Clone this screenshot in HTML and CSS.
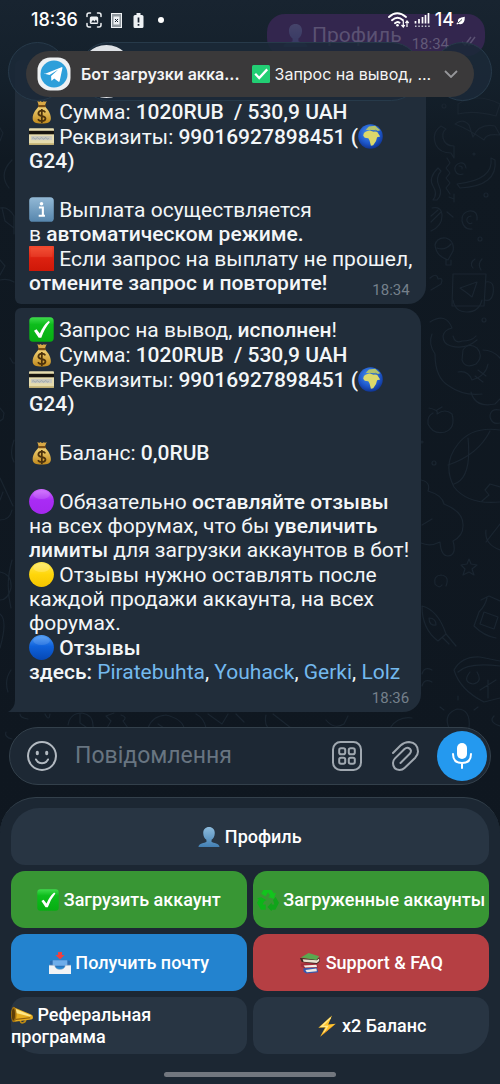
FILE: index.html
```html
<!DOCTYPE html>
<html lang="ru">
<head>
<meta charset="utf-8">
<meta name="viewport" content="width=device-width, initial-scale=1">
<title>Бот загрузки аккаунтов</title>
<link rel="stylesheet" href="styles.css">
</head>
<body>
<svg class="sprite" aria-hidden="true">
  <defs>
    <linearGradient id="g-purple" x2="0" y2="1"><stop stop-color="#cf6bff"/><stop offset=".45" stop-color="#a92bf5"/><stop offset="1" stop-color="#a428ee"/></linearGradient>
    <linearGradient id="g-yellow" x2="0" y2="1"><stop stop-color="#ffe955"/><stop offset=".5" stop-color="#ffd60a"/><stop offset="1" stop-color="#f5c400"/></linearGradient>
    <linearGradient id="g-blue" x2="0" y2="1"><stop stop-color="#4d9bf5"/><stop offset=".45" stop-color="#0f62dc"/><stop offset="1" stop-color="#0648b4"/></linearGradient>
    <linearGradient id="g-red" x2="0" y2="1"><stop stop-color="#f2492f"/><stop offset=".5" stop-color="#dc2110"/><stop offset="1" stop-color="#cf1808"/></linearGradient>
    <linearGradient id="g-green" x2="0" y2="1"><stop stop-color="#3fdc4c"/><stop offset=".3" stop-color="#0dbd1c"/><stop offset="1" stop-color="#07ad12"/></linearGradient>
    <linearGradient id="g-info" x2="0" y2="1"><stop stop-color="#93b9d6"/><stop offset="1" stop-color="#5686ad"/></linearGradient>
    <linearGradient id="g-gold" x2="0" y2="1"><stop stop-color="#f3d478"/><stop offset="1" stop-color="#c18a1d"/></linearGradient>
    <linearGradient id="g-person" x2="0" y2="1"><stop stop-color="#8dbbdc"/><stop offset="1" stop-color="#4380b4"/></linearGradient>
    <radialGradient id="g-sea" cx=".45" cy=".35" r=".7"><stop stop-color="#4c96f0"/><stop offset=".6" stop-color="#1e58cc"/><stop offset="1" stop-color="#0d2d86"/></radialGradient>
    <symbol id="e-money" viewBox="0 0 24 24"><path d="M8 2q2 1.500 3.200 0q1.300 1.500 3 .2q1.200 1 2.800-.2l-2 5h-5.500z" fill="#d9a845"/><path d="M9.300 7h6c1.500 2 5.700 6 5.700 11.500 0 4-3 5-8.800 5S3.500 22.500 3.500 18.500C3.500 13 8 9 9.300 7z" fill="url(#g-gold)"/><rect x="8.600" y="5.800" width="7.600" height="2.200" rx="1.100" fill="#7a4e15"/><path d="M15.700 12.800c-.7-1.200-2-1.600-3.400-1.600-2 0-3.300 1-3.300 2.600 0 3.700 6.800 1.700 6.800 5 0 1.500-1.400 2.500-3.500 2.500-1.700 0-3-.7-3.700-1.900M12.300 9.500v13.500" stroke="#4b310c" stroke-width="1.700" fill="none"/></symbol>
    <symbol id="e-card" viewBox="0 0 24 24"><rect y="4" width="24" height="16" rx="1" fill="#e6dcae"/><path d="M0 6.500h24v3.400H0z" fill="#17140e"/><rect x="2" y="11.500" width="20" height="4" fill="#c9c8bd"/><path d="M3 13.800q1-1.400 2 0t2 0 2 0 2 0 2 0 2 0 2 0 2 0" stroke="#8a99a6" fill="none" stroke-width=".7"/><path d="M0 18.500h24V20H0z" fill="#c2ae6e"/></symbol>
    <symbol id="e-info" viewBox="0 0 24 24"><rect x=".2" y=".2" width="23.600" height="23.600" rx="3.500" fill="url(#g-info)"/><circle cx="12" cy="6.500" r="1.700" fill="#fff"/><path d="M9.500 10h3.800v7.500M9.300 18h6" stroke="#fff" stroke-width="2" fill="none"/></symbol>
    <symbol id="e-red" viewBox="0 0 24 24"><rect width="24" height="24" rx=".8" fill="url(#g-red)"/><path d="M1.500 1.500h21v9h-21z" fill="#ff7a5a" opacity=".2"/></symbol>
    <symbol id="e-check" viewBox="0 0 24 24"><rect x=".3" y=".3" width="23.400" height="23.400" rx="3.500" fill="url(#g-green)"/><path d="M4.800 13.200l2.400-1.500 3.200 4.200q3-7.500 8.300-12l1.400 1Q15 11 11.800 19.800H9.300z" fill="#fff"/></symbol>
    <symbol id="e-check-flat" viewBox="0 0 18 18"><rect width="18" height="18" rx="1.500" fill="#22cf74"/><path d="M3.200 8.800l4 4.200 8-8.600" stroke="#fff" stroke-width="2.300" fill="none"/></symbol>
    <symbol id="e-globe" viewBox="0 0 24 24"><circle cx="12" cy="12" r="11.800" fill="url(#g-sea)"/><path d="M5.500 9q2-3 7-2.500l6 1.200 2.800 4.200-3 .8-1 3.600-2.700 4.200-2.200.3-1.300-5-1.200-2.200-3.400-.4-1.500-2z" fill="#dcd86a"/><path d="M7.500 5.500L10.500 2.500l6-.8 5 4.300-3.500 1-3.500-1.300-3 .6z" fill="#b3c26c"/><path d="M12 6l3 1 2-1 2 1" stroke="#2d67b8" fill="none" stroke-width=".8"/></symbol>
    <symbol id="e-purple" viewBox="0 0 24 24"><circle cx="12" cy="12" r="11.900" fill="url(#g-purple)"/><ellipse cx="12" cy="5.500" rx="8" ry="4" fill="#fff" opacity=".12"/></symbol>
    <symbol id="e-yellow" viewBox="0 0 24 24"><circle cx="12" cy="12" r="11.900" fill="url(#g-yellow)"/><ellipse cx="12" cy="5.500" rx="8" ry="4" fill="#fff" opacity=".2"/></symbol>
    <symbol id="e-blue" viewBox="0 0 24 24"><circle cx="12" cy="12" r="11.900" fill="url(#g-blue)"/><ellipse cx="12" cy="5.500" rx="8" ry="4" fill="#fff" opacity=".12"/></symbol>
    <symbol id="e-person" viewBox="0 0 24 24"><path d="M12 1c3.800 0 6.300 2.600 6.300 6.500 0 3.300-1.500 6.300-3.500 7.500v2.500c2 1.200 8.500 1 8.700 5.500H.5c.2-4.500 6.700-4.300 8.700-5.500V15c-2-1.200-3.500-4.200-3.500-7.500C5.700 3.600 8.200 1 12 1z" fill="url(#g-person)"/></symbol>
    <symbol id="e-outbox" viewBox="0 0 24 24"><path d="M1 10l3-1h16l3 1v6H1z" fill="#2c6cb3"/><path d="M4 9h16v6H4z" fill="#6fadea"/><path d="M0 14.500l6 .2q1 4.300 6 4.300t6-4.300l6-.2V24H0z" fill="#f2f3f5"/><path d="M0 14.500h6q1 4.500 6 4.500t6-4.500h6" stroke="#b7c2cf" fill="none" stroke-width=".6"/><path d="M9.800 0h4.400v3.300H17L12 8.200 7 3.300h2.800z" fill="#ef4040"/></symbol>
    <symbol id="e-recycle" viewBox="0 0 24 24"><path d="M7 1.200h9L18.500 5l2.300-1-2.500 6.700-6.300-2 2.500-1L12 3.500 9.500 8 4.700 5.300z" fill="#12c51d"/><path d="M4.500 9l6 3.300-2.300.8L6 17h3.500v5.500H4.300L0 15l2-3.500-2-1.300z" fill="#0cb518"/><path d="M17.500 12l2.800-3.200L24 15l-4 7.500h-4v2l-4.500-5 4.500-4.800V17h3z" fill="#10a51a"/></symbol>
    <symbol id="e-books" viewBox="0 0 24 24"><path d="M5 17l14-1.500 2 6.500-13 1.500-3-2z" fill="#3458b0"/><path d="M7 19.500l12-1.500.5 3-11 1.200z" fill="#eee9df"/><path d="M2 12.500l17.500-.5 1.500 5-15 .8-4-2z" fill="#a12b39"/><path d="M5 14.800l14-1 .7 2.500-13 .5z" fill="#f2ede2"/><path d="M1 6.500L19 8l3.500-2v4.500l-3 2.500L3 11z" fill="#3d2722"/><path d="M4 8l15.500 1 2.500-1.800v2.700l-2.600 2.200L5 10.500z" fill="#e9e1cf"/><path d="M2 6l8.500-5L22 4.500 19 8.600z" fill="#5aa84f"/></symbol>
    <symbol id="e-bolt" viewBox="0 0 24 24"><path d="M17.500.5L2.500 13.800l7.500-.3L4.500 23.700 21.500 9.500l-8.200.8z" fill="#ffc42e"/><path d="M16 3L6 12.500l6.500-.2-4 7" stroke="#ffe98a" stroke-width="1.300" fill="none"/><path d="M21.500 9.500L4.500 23.700l6-6z" fill="#f08a12"/></symbol>
    <symbol id="e-horn" viewBox="0 0 24 24"><path d="M10 17q0 4 3 3.500t3-3.500" stroke="#b98714" stroke-width="1.800" fill="none"/><path d="M3 3.500L22 11.500q2 .5 2 3t-2 2.500L2 19.500z" fill="#e6ad20"/><path d="M4 5l18 7.500-1.500 1L4 9.500z" fill="#ffe786"/><path d="M3 17l18-2" stroke="#8f600c" stroke-width="1.300"/><ellipse cx="3" cy="11.500" rx="3" ry="8.500" fill="#a5720f"/><ellipse cx="2.600" cy="11.500" rx="1.800" ry="6.500" fill="#5c3d08"/></symbol>
  </defs>
</svg>

<div class="app">
  <svg class="doodles" viewBox="0 0 500 1084" preserveAspectRatio="xMidYMin slice" aria-hidden="true">
    <g fill="none" stroke="#1a2530" stroke-width="1.200" stroke-linejoin="round" stroke-linecap="round">
      <path d="M458 104q18-12 42 0l-4 12q-22-6-38-2zM455 124q8-6 14 1l4 12q6-14 22-11l5 9q-14-2-16 5-14-10-29-16"/>
      <path d="M441 126q-10 7-5 19 4 8 15 8l3 5v-12q-9 0-11-8-1-6 3-9z"/>
      <path d="M466 168q-1-6-6-5-6 2-5 7 2 6 8 4m-4-8q4 0 3 3"/>
      <path d="M491 158q3 22-34 26l3 4q38-2 35-28z"/>
      <path d="M438 168q-10 10-5 18 5 8 0 14h4q6-6 2-14-4-8 2-15zM447 158l3 5-4 5 4 5-4 5 4 5-4 5 4 6"/>
      <path d="M477 220q1-10-8-9-8 2-7 10 2 9 10 8m-1-13q-5 1-4 5 2 4 5 2"/>
      <path d="M432 208q10-2 10 8 0 10-11 15M431 222l10-10M431 216l7-6M449 197l5 2m0-5v8M447 212l6 5"/>
      <path d="M435 245q2-8 11-7 9 3 7 13l-5 9q-12-4-13-15zM437 248q8 3 14-4M446 259v6h5v-5"/>
      <circle cx="480" cy="239" r="2"/><circle cx="486" cy="195" r="2"/><circle cx="474" cy="154" r="1"/><circle cx="444" cy="106" r="2"/>
      <path d="M430 278q7-6 8 1 6-2 3 5l-10 6M453 274h33l-2 32h-32zM486 282q9-2 7 12-2 8-8 6M460 288l17-6-5 15-5-4zM473 268q-4-5 2-9M481 270q-4-6 1-11"/>
      <path d="M453 300q2 12 14 12t15-12M430 322q16-10 22 6-8 2-9 8 0 8 8 10 14 4 26-6M432 334q-4 10 3 20 0 24 14 32 14 10 33 8"/>
      <path d="M453 336q2 8 9 5 10 0 14-5M463 350q5-8 14-2 7 8-1 16-11 5-14-4zM458 372q10-2 14 8 14-4 16-16M483 350q10 0 17 8M471 392q4 16 24 12l5-5M475 376l8 6M478 370l8 6"/>
      <path d="M429 408q10 2 8 6 8-6 15 0 4 14-7 18-12 3-17-8-1-8 5-11M437 410l5-3"/>
      <path d="M500 410q-10-2-10 7 2 8 10 6M500 430q-28-4-42 14-16 20-4 43 14 18 46 15M468 438q4 40-14 46M448 465q30-10 42-34M500 487l-10-3-5 6 4 5-7 6"/>
      <circle cx="434" cy="463" r="2"/><circle cx="422" cy="442" r="1"/><circle cx="484" cy="320" r="2"/>
      <path d="M421 480q10 2 7 11 14 4 16 13 20 8 19 22 0 10-10 15 4 14-5 15-7 0-8-14-10 5-19 1M422 525l10-6"/>
      <path d="M469 559l2 5 6 1-5 4 2 6-5-3-6 3 2-6-4-4 6-1zM446 586q4-10-5-11-8 1-6 9 4 5 7 1M422 606q16 4 24 28l-8 7q-16-12-16-35zM446 634l10 12M443 638l6 6M429 618q7 0 7 7-7 1-7-7"/>
      <path d="M486 530q-2 14 14 20M500 524l-14 18M481 600l8-4 11 5M479 612l-5 14q10 10 22 12M479 612q6-6 8-14M484 612l14 5-4 12-14-5z"/>
      <path d="M454 670q8-14 26-13l20 4M454 670q6 20 30 32l16-4M458 672q10-10 42-6M470 672q-8 10 3 12 10-2 4-12M488 680v18M480 690l16-10"/>
      <path d="M449 728q-6-14 8-19 14 0 12 19M458 700v-4M444 710l-4-3M474 710l4-3M432 670q-8-4-10 4M432 682q-8-4-10 4"/>
      <path d="M0 128l3 5-3 8M12 160q-14 14-3 28M0 208q8-2 14 8v18M2 208l3 13 9 7M0 260l5 6-5 9M0 280q8-2 14 2M10 358l3 5 3 0M0 408l4 5-1 6-3 2M14 440q-5 14 0 22M0 478l13 28M3 492l-3 8M0 520q10 0 12-10M12 560q-7 24-1 48M0 572q12 2 11 16-3 12-11 12M0 614q8 6 0 34M11 670q-7 10-3 22"/>
      <path d="M20 714q0 4 8 5M45 714q4 8 5 0M68 725q2-12 14-12 12 2 11 15M80 714v9l6 4M107 728l4-7-5-5 8-3M121 715q7 2 2 6l5 7M148 728q4-12 18-13 16 4 18 13M158 724l6 4M196 714q8 4 10 14M208 714l14 10 6-10M236 714l8 8M266 715q-2 8 2 13M273 714l18 14M326 720q8 10 18 4l4-8M390 728q8-12 22-10M6 732q-2 5 6 7M494 716q-6 6 6 10"/>
    </g>
  </svg>

  <main class="chat">
    <article class="bubble bubble--out">
      <svg class="emoji emoji--dim" role="img" aria-label="👤"><use href="#e-person"/></svg>
      <span class="out-text">Профиль</span>
      <time>18:34</time>
      <svg class="ticks" viewBox="0 0 16 10" aria-hidden="true"><path d="M1 6l3 3 6-8M7 8l1 1 6-8" fill="none" stroke="currentColor" stroke-width="1.500"/></svg>
    </article>

    <article class="bubble bubble--covered">
      <div class="block">
        <p><svg class="emoji" role="img" aria-label="💰"><use href="#e-money"/></svg> Сумма: <b>1020RUB&nbsp; / 530,9 UAH</b></p>
        <p><svg class="emoji" role="img" aria-label="💳"><use href="#e-card"/></svg> Реквизиты: <b>99016927898451 (<svg class="emoji" role="img" aria-label="🌍"><use href="#e-globe"/></svg><br>G24)</b></p>
      </div>
      <div class="block">
        <p><svg class="emoji" role="img" aria-label="ℹ️"><use href="#e-info"/></svg> Выплата осуществляется<br>в <b>автоматическом режиме.</b></p>
        <div class="last-line">
          <p><svg class="emoji" role="img" aria-label="🟥"><use href="#e-red"/></svg> Если запрос на выплату не прошел,<br><b>отмените запрос и повторите!</b></p>
          <time>18:34</time>
        </div>
      </div>
    </article>

    <article class="bubble bubble--tail">
      <div class="block">
        <p><svg class="emoji" role="img" aria-label="✅"><use href="#e-check"/></svg> Запрос на вывод, <b>исполнен</b>!</p>
        <p><svg class="emoji" role="img" aria-label="💰"><use href="#e-money"/></svg> Сумма: <b>1020RUB&nbsp; / 530,9 UAH</b></p>
        <p><svg class="emoji" role="img" aria-label="💳"><use href="#e-card"/></svg> Реквизиты: <b>99016927898451 (<svg class="emoji" role="img" aria-label="🌍"><use href="#e-globe"/></svg><br>G24)</b></p>
      </div>
      <div class="block">
        <p><svg class="emoji" role="img" aria-label="💰"><use href="#e-money"/></svg> Баланс: <b>0,0RUB</b></p>
      </div>
      <div class="block">
        <p><svg class="emoji" role="img" aria-label="🟣"><use href="#e-purple"/></svg> Обязательно <b>оставляйте отзывы</b><br>на всех форумах, что бы <b>увеличить<br>лимиты</b> для загрузки аккаунтов в бот!</p>
        <p><svg class="emoji" role="img" aria-label="🟡"><use href="#e-yellow"/></svg> Отзывы нужно оставлять после<br>каждой продажи аккаунта, на всех<br>форумах.</p>
        <p><svg class="emoji" role="img" aria-label="🔵"><use href="#e-blue"/></svg> <b>Отзывы<br>здесь:</b> <a href="#piratebuhta">Piratebuhta</a>, <a href="#youhack">Youhack</a>, <a href="#gerki">Gerki</a>, <a href="#lolz">Lolz</a></p>
      </div>
      <time>18:36</time>
      <svg class="tail" viewBox="0 0 16 22" aria-hidden="true"><path d="M7 0v10q0 8-7 12h16V0z" fill="#212d3a"/></svg>
    </article>
  </main>

  <form class="composer">
    <button class="icon-btn" type="button" aria-label="Емодзі"><svg viewBox="0 0 32 32"><g fill="none" stroke="#b3bac1" stroke-width="2" stroke-linecap="round"><circle cx="16" cy="16" r="14"/><path d="M10 19.500q2 3.800 6 3.800t6-3.800"/></g><ellipse cx="11.300" cy="13" rx="1.600" ry="2.200" fill="#b3bac1"/><ellipse cx="20.700" cy="13" rx="1.600" ry="2.200" fill="#b3bac1"/></svg></button>
    <input class="field" type="text" placeholder="Повідомлення" aria-label="Повідомлення">
    <button class="icon-btn" type="button" aria-label="Клавіатура бота"><svg viewBox="0 0 32 32"><g fill="none" stroke="#a0a8b0" stroke-width="2"><rect x="2" y="2" width="28" height="28" rx="7.500"/><rect x="8.200" y="8.200" width="6" height="6" rx="1.800"/><rect x="17.800" y="8.200" width="6" height="6" rx="1.800"/><rect x="8.200" y="17.800" width="6" height="6" rx="1.800"/><rect x="17.800" y="17.800" width="6" height="6" rx="1.800"/></g></svg></button>
    <button class="icon-btn" type="button" aria-label="Прикріпити файл"><svg viewBox="0 0 32 32"><path d="M4 13l7.500-7.500Q15.500 2 20 2q9 1 9 9.500 0 3.500-3 6.500L15.500 28q-2 2-5 2-6.500-.5-6.500-7 0-2.600 2-4.600L15.500 9q2-1.800 4-1 4 2 1.500 5.500L11.500 23" fill="none" stroke="#a0a8b0" stroke-width="2" stroke-linecap="round" stroke-linejoin="round"/></svg></button>
    <button class="mic" type="button" aria-label="Голосове повідомлення"><svg viewBox="0 0 24 28"><rect x="7" y="1" width="10" height="16" rx="5" fill="#fff"/><path d="M3 12q0 9 9 9t9-9M12 21v5" fill="none" stroke="#fff" stroke-width="2" stroke-linecap="round"/></svg></button>
  </form>

  <section class="keyboard" aria-label="Клавиатура бота">
    <div class="keys">
      <button class="key key--wide" type="button"><span><svg class="emoji" aria-hidden="true"><use href="#e-person"/></svg> Профиль</span></button>
      <button class="key key--green" type="button"><span><svg class="emoji" aria-hidden="true"><use href="#e-check"/></svg> Загрузить аккаунт</span></button>
      <button class="key key--green" type="button"><span><svg class="emoji" aria-hidden="true"><use href="#e-recycle"/></svg> Загруженные аккаунты</span></button>
      <button class="key key--blue" type="button"><span><svg class="emoji" aria-hidden="true"><use href="#e-outbox"/></svg> Получить почту</span></button>
      <button class="key key--red" type="button"><span><svg class="emoji" aria-hidden="true"><use href="#e-books"/></svg> Support &amp; FAQ</span></button>
      <button class="key key--start" type="button"><span><svg class="emoji" aria-hidden="true"><use href="#e-horn"/></svg> Реферальная<br>программа</span></button>
      <button class="key key--end" type="button"><span><svg class="emoji" aria-hidden="true"><use href="#e-bolt"/></svg> x2 Баланс</span></button>
    </div>
    <div class="home-bar"></div>
  </section>

  <div class="chat-header" aria-hidden="true">
    <span class="round"></span>
    <span class="title-pill"><span class="avatar"></span></span>
    <span class="round"></span>
  </div>

  <header class="status">
    <span class="clock">18:36</span>
    <svg class="st-icon st-icon--shot" viewBox="0 0 16 16" aria-hidden="true"><g fill="none" stroke="#eef1f4" stroke-width="1.500" stroke-linecap="round"><path d="M1 4.500V3q0-2 2-2h1.500M11.500 1H13q2 0 2 2v1.500M15 11.500V13q0 2-2 2h-1.500M4.500 15H3q-2 0-2-2v-1.500"/></g><rect x="3.800" y="4.500" width="8.400" height="7.500" rx="1.500" fill="#eef1f4"/><path d="M5 10.500l2-2.500 1.500 1.500L10 7.500l1.500 3z" fill="#17222e"/></svg>
    <svg class="st-icon st-icon--tall" viewBox="0 0 11 15" aria-hidden="true"><rect x=".5" y=".5" width="10" height="14" fill="#8f979e" stroke="#eef1f4"/><rect x="2.500" y="3.500" width="6" height="8" fill="#eef1f4"/><path d="M4 6l3 3M7 6L4 9" stroke="#17222e"/></svg>
    <svg class="st-icon st-icon--tall st-icon--battery" viewBox="0 0 11 15" aria-hidden="true"><path d="M3.500 0h4v2H9q1.500 0 1.500 1.500v10Q10.500 15 9 15H2Q.5 15 .5 13.500v-10Q.5 2 2 2h1.500z" fill="#eef1f4"/><path d="M5.500 4.500v5M5.500 11v1.700" stroke="#17222e" stroke-width="1.700"/></svg>
    <span class="dot"></span>
    <svg class="st-icon st-icon--wifi" viewBox="0 0 22 16" aria-hidden="true"><g fill="none" stroke="#fff" stroke-width="1.900" stroke-linecap="round"><path d="M1 5q8-7.500 17 0M4 8.200q5.500-5 11 0M7 11.200q2.500-2.200 4.500-.5"/></g><circle cx="9.500" cy="13.300" r="1.300" fill="#fff"/><path d="M15.300 9v6m-1.800-2l1.800 2 1.500-2M19 15V9m-1.600 2L19 9l1.700 2" stroke="#fff" stroke-width="1.200" fill="none"/></svg>
    <svg class="st-icon st-icon--signal" viewBox="0 0 16 16" aria-hidden="true"><path d="M1.500 9v2.500M5 7v4.500M8.500 5v6.500M11.500 3v8.500M14.500 1v10.500" stroke="#fff" stroke-width="1.700"/><path d="M1 14.200h15" stroke="#c5cad0" stroke-width="1.500" stroke-dasharray="1.500 1.800"/></svg>
    <span class="charge">14</span>
    <svg class="st-icon st-icon--leaf" viewBox="0 0 9 9" aria-hidden="true"><path d="M8.800.8Q9 8.500 4 8.300l-1.500-.5L1 8.500l-.6-.8L2 6Q.6 1.800 8.800.8z" fill="#fff"/><path d="M2 7l4-3.500" stroke="#17222e" stroke-width=".8"/></svg>
  </header>

  <aside class="banner">
    <svg class="banner-logo" viewBox="0 0 34 34" aria-hidden="true"><rect x=".5" y=".5" width="33" height="33" rx="12.500" fill="#eef1f3"/><circle cx="17" cy="17" r="13.500" fill="#2d9fda"/><path d="M7.500 17L24.500 10.200q1.200-.4.9 1L22.700 24q-.4 1.300-1.500.6l-4-3-2.200 2q-.6.400-.7-.5l-.2-4 7.200-6.600-8.800 5.600-5-1.300q-.8-.4 0-.8z" fill="#fff"/></svg>
    <strong class="banner-title">Бот загрузки акка...</strong>
    <svg class="banner-check" role="img" aria-label="✅"><use href="#e-check-flat"/></svg>
    <span class="banner-text">Запрос на вывод, ...</span>
    <button class="expand" type="button" aria-label="Развернуть"><svg viewBox="0 0 14 8"><path d="M1 1l6 6 6-6" fill="none" stroke="#96979a" stroke-width="1.800"/></svg></button>
  </aside>
</div>
</body>
</html>
```
FILE: styles.css
```css
* { box-sizing: border-box; }

body {
  margin: 0;
  background: #101922;
  color: #f3f6f8;
  font-family: Roboto, "Noto Sans", sans-serif;
}

p { margin: 0; }
a { color: #74b9ee; text-decoration: none; }
b { font-weight: 500; }

button {
  margin: 0;
  padding: 0;
  border: 0;
  background: none;
  color: inherit;
  font: inherit;
}

.sprite { position: absolute; width: 0; height: 0; }

.app {
  position: relative;
  display: flex;
  flex-direction: column;
  min-height: 100vh;
  overflow: hidden;
  background: linear-gradient(#182430 0, #14202b 80px, #101922 160px, #0f1720 760px, #101821 100%);
}

.doodles {
  position: absolute;
  inset: 0;
  width: 100%;
  height: 100%;
}

/* Messages */
.chat {
  position: relative;
  flex: 1;
  display: flex;
  flex-direction: column;
  justify-content: flex-end;
  align-items: flex-start;
  gap: 4px;
  padding: 0 15px 15px;
}

.bubble {
  position: relative;
  display: flex;
  flex-direction: column;
  gap: 25px;
  padding: 10px 12px 5px 14px;
  border-radius: 6px 18px 18px 6px;
  background: #212d3a;
  font-size: 21px;
  line-height: 24px;
}

.bubble--covered {
  padding-top: 40px;
  padding-right: 16px;
}

.bubble--tail { border-bottom-left-radius: 0; }
.bubble--tail > time { margin-top: -20px; }

.bubble--out {
  align-self: flex-end;
  flex-direction: row;
  align-items: center;
  gap: 4px;
  height: 42px;
  padding: 0 8px 0 16px;
  border-radius: 18px;
  background: #33264e;
  color: #5b5273;
}

.out-text { padding-right: 6px; }
.bubble--out time { align-self: flex-end; margin-bottom: 3px; color: #625a78; }
.ticks { align-self: flex-end; width: 16px; height: 10px; margin: 0 0 10px 8px; }

.block {
  display: flex;
  flex-direction: column;
  gap: 1px;
}

.last-line {
  display: flex;
  align-items: flex-end;
}

.last-line p { margin-bottom: 4px; }
.last-line time { margin-left: -40px; }

time {
  align-self: flex-end;
  color: #75808b;
  font-size: 15px;
  line-height: 18px;
}

.tail {
  position: absolute;
  left: -7px;
  bottom: 0;
  width: 16px;
  height: 22px;
}

.emoji {
  display: inline-block;
  width: 25px;
  height: 25px;
  margin: -4px 0;
  vertical-align: -1px;
}

.emoji--dim { opacity: 0.2; }

/* Message field */
.composer {
  position: relative;
  display: flex;
  align-items: center;
  gap: 26px;
  margin: 0 9px 12px;
  padding: 3px 3px 3px 16px;
  border: 1px solid #33404b;
  border-radius: 29px;
  background: #1d2834;
}

.icon-btn { width: 32px; height: 32px; }
.icon-btn svg { display: block; width: 32px; height: 32px; }

.field {
  flex: 1;
  min-width: 0;
  margin-left: -9px;
  padding: 0;
  border: 0;
  outline: 0;
  background: none;
  color: #f3f6f8;
  font: 23px/28px Roboto, "Noto Sans", sans-serif;
}

.field::placeholder { color: #687581; opacity: 1; }

.mic {
  display: flex;
  align-items: center;
  justify-content: center;
  width: 50px;
  height: 50px;
  margin-left: -10px;
  border-radius: 50%;
  background: #2499ef;
}

.mic svg { width: 24px; height: 28px; }

/* Reply keyboard */
.keyboard {
  position: relative;
  padding: 10px 11px 7px;
  border-top: 1px solid #33404b;
  border-radius: 36px 36px 0 0;
  background: #1c2733;
}

.keys {
  display: grid;
  grid-template-columns: 1fr 1fr;
  gap: 6px;
}

.key {
  display: flex;
  align-items: center;
  justify-content: center;
  min-height: 57px;
  border-radius: 14px;
  background: #283543;
  color: #fff;
  font-size: 18px;
  font-weight: 500;
  line-height: 22px;
  white-space: nowrap;
}

.key .emoji {
  width: 22px;
  height: 22px;
}

.key--wide {
  grid-column: 1 / -1;
  border-radius: 28px 28px 14px 14px;
}

.key--green { background: #389634; }
.key--blue { background: #2383cf; }
.key--red { background: #b53f43; }

.key--start {
  justify-content: flex-start;
  border-bottom-left-radius: 28px;
  text-align: left;
}

.key--end { border-bottom-right-radius: 28px; }

.home-bar {
  width: 36%;
  height: 5px;
  margin: 18px auto 0;
  border-radius: 3px;
  background: #72777f;
}

/* Chat header seen behind the banner */
.chat-header {
  position: absolute;
  top: 42px;
  left: 8px;
  right: 8px;
  display: flex;
  gap: 12px;
}

.round,
.title-pill {
  height: 59px;
  border: 1px solid #273a4a;
  border-radius: 30px;
  background: rgba(27, 41, 56, 0.85);
}

.round { width: 59px; }

.title-pill {
  flex: 1;
  display: flex;
  align-items: center;
}

.avatar {
  width: 53px;
  height: 53px;
  border-radius: 50%;
  background: #dfe2e6;
}

/* Status bar */
.status {
  position: absolute;
  top: 0;
  left: 0;
  right: 0;
  display: flex;
  align-items: center;
  height: 40px;
  padding: 0 35px 0 31px;
  color: #fff;
  font: 500 18px/20px Inter, Roboto, sans-serif;
}

.st-icon { height: 16px; }
.st-icon--shot { width: 16px; margin-left: 8px; }
.st-icon--tall { width: 11px; height: 15px; margin-left: 9px; }
.st-icon--battery { margin-left: 11px; }

.dot {
  width: 6px;
  height: 6px;
  margin: 0 auto 0 14px;
  border-radius: 50%;
  background: #fff;
}

.st-icon--wifi { width: 22px; }
.st-icon--signal { width: 16px; margin: 0 5px 0 4px; }
.st-icon--leaf { width: 9px; height: 9px; margin-left: 2px; }

/* Notification banner */
.banner {
  position: absolute;
  top: 51px;
  left: 26px;
  right: 26px;
  display: flex;
  align-items: center;
  height: 46px;
  padding: 0 16px 0 11px;
  border-radius: 23px;
  background: #3a393a;
  color: #f4f4f5;
  font: 400 16px/20px Inter, Roboto, sans-serif;
  white-space: nowrap;
}

.banner-logo { width: 34px; height: 34px; margin-right: 10px; }
.banner-title { font-weight: 600; }
.banner-check { width: 18px; height: 18px; margin: 0 5px 0 12px; }
.expand { display: flex; margin-left: auto; }
.expand svg { width: 14px; height: 8px; }
```
